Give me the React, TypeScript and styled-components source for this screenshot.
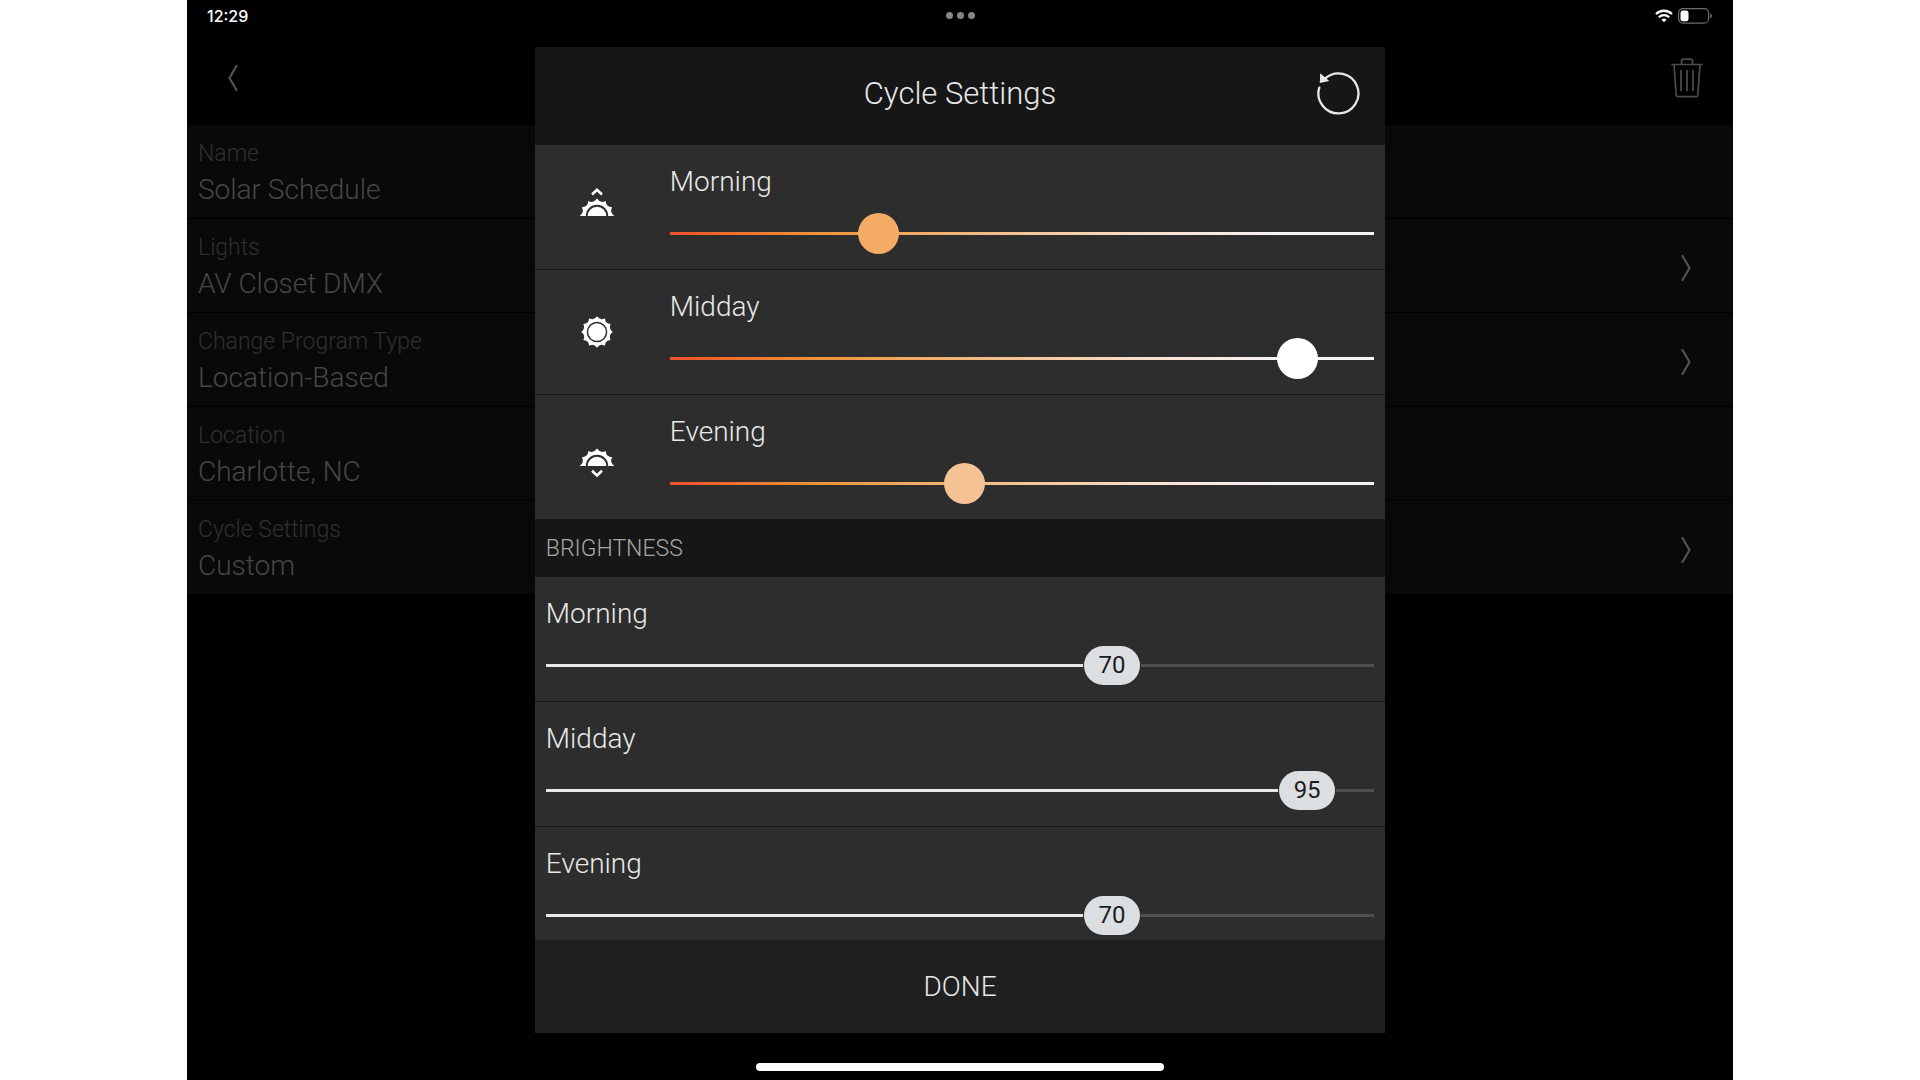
import React, { useId, useState } from "react";
import styled, { createGlobalStyle, css } from "styled-components";

const GlobalStyle = createGlobalStyle`
  *, *::before, *::after { box-sizing: border-box; }
  body {
    margin: 0;
    background: #fff;
    font-family: Roboto, "Liberation Sans", sans-serif;
    font-weight: 300;
  }
  button { font: inherit; color: inherit; background: none; border: 0; padding: 0; cursor: pointer; }
`;

/* ---------- tablet screen ---------- */

const Screen = styled.div`
  position: relative;
  display: flex;
  flex-direction: column;
  max-width: 1546px;
  min-height: 100vh;
  margin: 0 auto;
  background: #000;
`;

const StatusBar = styled.header`
  display: grid;
  grid-template-columns: 1fr auto 1fr;
  align-items: center;
  height: 31px;
  padding: 0 20px;
  color: #fff;
`;

const Clock = styled.time`
  font: 500 16px/20px Inter, sans-serif;
`;

const Dots = styled.div`
  display: flex;
  gap: 4px;
`;

const Dot = styled.span`
  width: 7px;
  height: 7px;
  border-radius: 50%;
  background: #858585;
`;

const StatusIcons = styled.div`
  display: flex;
  justify-content: flex-end;
  align-items: center;
  gap: 5px;
`;

const NavBar = styled.nav`
  display: flex;
  justify-content: space-between;
  align-items: center;
  height: 94px;
  padding: 0 24px;
  color: #4c4c4c;
`;

const NavButton = styled.button`
  display: grid;
  place-items: center;
  width: 44px;
  height: 44px;
`;

const List = styled.ul`
  flex: 1;
  margin: 0;
  padding: 0;
  list-style: none;
`;

const Item = styled.li`
  background: #090909;
  border-bottom: 1px solid #000;
`;

const itemLayout = css`
  display: flex;
  align-items: center;
  justify-content: space-between;
  width: 100%;
  padding: 13px 41px 8px 11px;
  text-align: left;
`;

const ItemBody = styled.div`
  ${itemLayout}
`;

const ItemButton = styled.button`
  ${itemLayout}
`;

const ItemText = styled.span`
  display: flex;
  flex-direction: column;
`;

const ItemLabel = styled.span`
  font-size: 23px;
  line-height: 32px;
  color: #303030;
`;

const ItemValue = styled.span`
  font-size: 28px;
  line-height: 40px;
  color: #464646;
`;

const HomeIndicator = styled.div`
  align-self: center;
  width: 408px;
  max-width: 60%;
  height: 8px;
  margin-bottom: 9px;
  border-radius: 4px;
  background: #fff;
`;

/* ---------- dialog ---------- */

const Overlay = styled.div`
  position: absolute;
  inset: 0;
  display: flex;
  justify-content: center;
  padding: 47px 0;
  pointer-events: none;
`;

const Dialog = styled.section`
  display: flex;
  flex-direction: column;
  width: 55%;
  background: #2d2d2d;
  color: #e8e8e8;
  pointer-events: auto;
`;

const DialogHeader = styled.header`
  display: grid;
  grid-template-columns: 44px 1fr 44px;
  align-items: center;
  flex: none;
  height: 98px;
  padding: 0 24px 5px;
  background: #161616;
`;

const Title = styled.h1`
  grid-column: 2;
  margin: 0;
  font-size: 31px;
  line-height: 40px;
  font-weight: 300;
  text-align: center;
`;

const ResetButton = styled.button`
  display: grid;
  place-items: center;
  height: 44px;
`;

const DialogBody = styled.div`
  flex: 1 1 0;
  min-height: 0;
  overflow: hidden;
`;

const Row = styled.div<{ $icon?: boolean }>`
  display: grid;
  grid-template-columns: ${(p) => (p.$icon ? "124px 1fr" : "1fr")};
  align-items: center;
  border-bottom: 1px solid #171717;
`;

const RowIcon = styled.div`
  display: grid;
  place-items: center;
`;

const Field = styled.div`
  display: flex;
  flex-direction: column;
  gap: 13px;
  padding: 19px 11px 15px;
`;

const FieldLabel = styled.label`
  font-size: 28px;
  line-height: 36px;
`;

const SectionTitle = styled.h2`
  margin: 0;
  padding: 0 11px;
  font-size: 23px;
  line-height: 57px;
  font-weight: 300;
  color: #a6a6a6;
  background: #161616;
`;

const SliderBox = styled.div`
  position: relative;
  display: flex;
`;

const rangeReset = css`
  appearance: none;
  display: block;
  width: 100%;
  height: 41px;
  margin: 0;
  background: none;
  cursor: pointer;
`;

const WarmRange = styled.input<{ $tone: string }>`
  ${rangeReset}
  &::-webkit-slider-runnable-track {
    height: 41px;
    background: linear-gradient(90deg, #f0502a 0%, #ee7a30 12%, #f0963c 22%, #f2b070 38%, #f5c79c 52%, #f8e0cc 68%, #f6f3f7 86%)
      center / 100% 3px no-repeat;
  }
  &::-webkit-slider-thumb {
    appearance: none;
    width: 41px;
    height: 41px;
    border-radius: 50%;
    background: ${(p) => p.$tone};
  }
`;

const LevelRange = styled.input`
  ${rangeReset}
  &::-webkit-slider-runnable-track {
    height: 39px;
    background: linear-gradient(90deg, #e8e6e7 var(--fill), #4f4f4f var(--fill)) center / 100% 3px no-repeat;
  }
  &::-webkit-slider-thumb {
    appearance: none;
    width: 56px;
    height: 39px;
    border-radius: 20px;
    background: #dcdfe2;
    box-shadow: 0 0 0 1px #2d2d2d;
  }
`;

const LevelValue = styled.output`
  position: absolute;
  top: 0;
  width: 56px;
  font-size: 24px;
  line-height: 41px;
  font-weight: 400;
  text-align: center;
  color: #1c1c1c;
  pointer-events: none;
`;

const DoneButton = styled.button`
  flex: none;
  height: 93px;
  font-size: 28px;
  background: #202020;
`;

/* ---------- icons ---------- */

const Chevron = ({ back }: { back?: boolean }) => (
  <svg width="12" height="28" viewBox="0 0 12 28" fill="none" stroke="#525252" strokeWidth="2.2" strokeLinecap="round" strokeLinejoin="round">
    <path d={back ? "M9.5 2 2.5 14l7 12" : "M2.5 2l7 12-7 12"} />
  </svg>
);

const TrashIcon = () => (
  <svg width="32" height="40" viewBox="0 0 32 40" fill="none" stroke="currentColor" strokeWidth="1.7" strokeLinecap="round" strokeLinejoin="round">
    <path d="M1 6.5h30M10.5 6V3.2a2 2 0 0 1 2-2h7a2 2 0 0 1 2 2V6M3 6.5l2.2 30.500a1.800 1.800 0 0 0 1.800 1.700h18a1.800 1.800 0 0 0 1.800-1.700L29 6.5M10 12.500v20M16 12.500v20M22 12.500v20" />
  </svg>
);

const WifiIcon = () => (
  <svg width="18" height="14" viewBox="0 0 18 14" fill="none" stroke="#fff" strokeWidth="2.3">
    <path d="M1 5a11.500 11.500 0 0 1 16 0M3.900 8.200a7.300 7.300 0 0 1 10.200 0" />
    <path d="M9 13.300 6.500 10.700a3.600 3.600 0 0 1 5 0z" fill="#fff" stroke="none" />
  </svg>
);

const BatteryIcon = () => (
  <svg width="35" height="16" viewBox="0 0 35 16">
    <rect x="0.6" y="0.6" width="30" height="14.6" rx="4.5" fill="none" stroke="#6c6c6c" strokeWidth="1.2" />
    <rect x="2.5" y="2.5" width="8" height="10.8" rx="2.4" fill="#fff" />
    <path d="M32.200 5.300c2.200.8 2.200 4.400 0 5.200z" fill="#6c6c6c" />
  </svg>
);

const ResetIcon = () => (
  <svg width="44" height="44" viewBox="0.5 1 44 44">
    <path d="M2.800 16.600A20 20 0 1 0 8.500 7.600" fill="none" stroke="#e8e8e8" strokeWidth="2.3" strokeLinecap="round" />
    <path d="M3.700 2.300 3.300 12l9.400-1.900z" fill="#e8e8e8" />
  </svg>
);

/* Outline of a sun with concave edges between its tips, from angle a0 over `steps` tips. */
const sunPath = (cx: number, cy: number, tip: number, dip: number, a0: number, steps: number) => {
  const at = (deg: number, r: number) => {
    const a = (deg * Math.PI) / 180;
    return `${(cx + r * Math.cos(a)).toFixed(2)} ${(cy + r * Math.sin(a)).toFixed(2)}`;
  };
  let d = `M${at(a0, tip)}`;
  for (let i = 0; i < steps; i++) {
    d += `Q${at(a0 + i * 30 + 15, dip)} ${at(a0 + (i + 1) * 30, tip)}`;
  }
  return d + "Z";
};

type Phase = "morning" | "midday" | "evening";

const SunIcon = ({ phase }: { phase: Phase }) => (
  <svg width="44" height="44" viewBox="0 0 44 44" fill="#fff">
    {phase === "midday" ? (
      <>
        <path fillRule="evenodd" d={sunPath(22, 22, 15.8, 11.6, -90, 12) + "M11.700 22a10.300 10.300 0 1 0 20.600 0a10.300 10.300 0 1 0-20.600 0z"} />
        <circle cx="22" cy="22" r="8.8" />
      </>
    ) : (
      <>
        <path fillRule="evenodd" d={sunPath(22, 31, 17.4, 12.8, 180, 6) + "M10.800 31a11.200 11.200 0 0 1 22.400 0z"} />
        <path d="M12.700 31a9.300 9.300 0 0 1 18.600 0z" />
        <path
          d={phase === "morning" ? "M17 9.500 22 4.800l5 4.700" : "M17 35.800 22 40.500l5-4.700"}
          fill="none"
          stroke="#fff"
          strokeWidth="2.6"
        />
      </>
    )}
  </svg>
);

/* ---------- parts ---------- */

const settings = [
  { label: "Name", value: "Solar Schedule", link: false },
  { label: "Lights", value: "AV Closet DMX", link: true },
  { label: "Change Program Type", value: "Location-Based", link: true },
  { label: "Location", value: "Charlotte, NC", link: false },
  { label: "Cycle Settings", value: "Custom", link: true },
];

const warmth: { phase: Phase; label: string; start: number; tone: string }[] = [
  { phase: "morning", label: "Morning", start: 284, tone: "#f3ab66" },
  { phase: "midday", label: "Midday", start: 915, tone: "#ffffff" },
  { phase: "evening", label: "Evening", start: 413, tone: "#f5c393" },
];

const levels = [
  { label: "Morning", start: 70 },
  { label: "Midday", start: 95 },
  { label: "Evening", start: 70 },
];

const SettingItem = ({ label, value, link }: (typeof settings)[number]) => {
  const text = (
    <ItemText>
      <ItemLabel>{label}</ItemLabel>
      <ItemValue>{value}</ItemValue>
    </ItemText>
  );
  return (
    <Item>
      {link ? (
        <ItemButton type="button">
          {text}
          <Chevron />
        </ItemButton>
      ) : (
        <ItemBody>{text}</ItemBody>
      )}
    </Item>
  );
};

const WarmthRow = ({ phase, label, start, tone }: (typeof warmth)[number]) => {
  const id = useId();
  const [value, setValue] = useState(start);
  return (
    <Row $icon>
      <RowIcon>
        <SunIcon phase={phase} />
      </RowIcon>
      <Field>
        <FieldLabel htmlFor={id}>{label}</FieldLabel>
        <WarmRange id={id} type="range" min={0} max={1000} value={value} $tone={tone} onChange={(e) => setValue(Number(e.target.value))} />
      </Field>
    </Row>
  );
};

const LevelRow = ({ label, start }: (typeof levels)[number]) => {
  const id = useId();
  const [value, setValue] = useState(start);
  const share = (value - 1) / 99;
  return (
    <Row>
      <Field>
        <FieldLabel htmlFor={id}>{label}</FieldLabel>
        <SliderBox>
          <LevelRange
            id={id}
            type="range"
            min={1}
            max={100}
            value={value}
            style={{ "--fill": `${share * 100}%` } as React.CSSProperties}
            onChange={(e) => setValue(Number(e.target.value))}
          />
          <LevelValue htmlFor={id} style={{ left: `calc((100% - 56px) * ${share})` }}>
            {value}
          </LevelValue>
        </SliderBox>
      </Field>
    </Row>
  );
};

export default function App() {
  return (
    <>
      <GlobalStyle />
      <Screen>
        <StatusBar>
          <Clock>12:29</Clock>
          <Dots>
            <Dot />
            <Dot />
            <Dot />
          </Dots>
          <StatusIcons>
            <WifiIcon />
            <BatteryIcon />
          </StatusIcons>
        </StatusBar>
        <NavBar>
          <NavButton type="button" aria-label="Back">
            <Chevron back />
          </NavButton>
          <NavButton type="button" aria-label="Delete">
            <TrashIcon />
          </NavButton>
        </NavBar>
        <List>
          {settings.map((s) => (
            <SettingItem key={s.label} {...s} />
          ))}
        </List>
        <HomeIndicator />
        <Overlay>
          <Dialog role="dialog" aria-labelledby="dialog-title">
            <DialogHeader>
              <Title id="dialog-title">Cycle Settings</Title>
              <ResetButton type="button" aria-label="Reset">
                <ResetIcon />
              </ResetButton>
            </DialogHeader>
            <DialogBody>
              {warmth.map((w) => (
                <WarmthRow key={w.phase} {...w} />
              ))}
              <SectionTitle>BRIGHTNESS</SectionTitle>
              {levels.map((l) => (
                <LevelRow key={l.label} {...l} />
              ))}
            </DialogBody>
            <DoneButton type="button">DONE</DoneButton>
          </Dialog>
        </Overlay>
      </Screen>
    </>
  );
}
